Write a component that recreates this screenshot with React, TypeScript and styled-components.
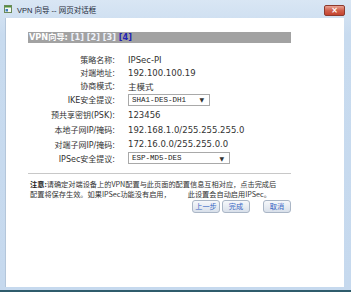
import React from 'react';
import styled, { createGlobalStyle } from 'styled-components';

const GlobalStyle = createGlobalStyle`
  html, body { margin: 0; padding: 0; background: #ffffff; }
  body { font-family: "DejaVu Sans", "Noto Sans CJK SC", sans-serif; }
`;

const Frame = styled.div`
  width: 351px;
  height: 292px;
  display: flex;
  flex-direction: column;
  box-sizing: border-box;
  background: linear-gradient(180deg, #d9e6f4 0%, #c8dbef 12%, #c6d9ee 100%);
  border-bottom: 2px solid #2f5c6c;
  overflow: hidden;
`;

const TitleBar = styled.div`
  height: 18px;
  flex: none;
  display: flex;
  align-items: center;
  padding: 0 6px 0 4px;
  gap: 5px;
`;

const TitleText = styled.span`
  font-family: "Liberation Sans", "Noto Sans CJK SC", sans-serif;
  font-size: 7.5px;
  color: #1e2a3a;
  flex: 1;
`;

const CloseButton = styled.div`
  width: 19px;
  height: 9px;
  border-radius: 2px;
  border: 1px solid #8c3a2e;
  background: linear-gradient(180deg, #e9a394 0%, #d0604c 50%, #c4432f 100%);
  color: #ffffff;
  font-family: "DejaVu Sans", sans-serif;
  font-size: 8px;
  font-weight: bold;
  line-height: 9px;
  text-align: center;
  margin-top: 2px;
`;

const Body = styled.div`
  flex: 1;
  margin: 0 7px 3px 5px;
  background: #ffffff;
  border-left: 1px solid #b4c6da;
  padding: 14px 0 0 22px;
  box-sizing: border-box;
`;

const Content = styled.div`
  width: 263px;
  display: flex;
  flex-direction: column;
`;

const StepBar = styled.div`
  height: 11px;
  background: #a2a2a2;
  color: #ffffff;
  font-size: 8.2px;
  font-weight: bold;
  line-height: 11px;
  padding-left: 1px;
  white-space: pre;
`;

const Step = styled.span<{ $active?: boolean }>`
  color: ${(p) => (p.$active ? '#2323b4' : '#eef2fb')};
`;

const Form = styled.div`
  display: grid;
  grid-template-columns: 87px 1fr;
  column-gap: 13px;
  margin-top: 10px;
`;

const Label = styled.div<{ $h: number }>`
  height: ${(p) => p.$h}px;
  display: flex;
  align-items: center;
  justify-content: flex-end;
  font-size: 8px;
  color: #333333;
  white-space: nowrap;
`;

const Value = styled.div<{ $h: number }>`
  height: ${(p) => p.$h}px;
  display: flex;
  align-items: center;
  font-size: 8.5px;
  color: #333333;
  white-space: nowrap;
`;

const Select = styled.div<{ $w: number }>`
  width: ${(p) => p.$w}px;
  height: 12px;
  box-sizing: border-box;
  border: 1px solid #a9a9a9;
  background: #ffffff;
  display: flex;
  align-items: center;
  justify-content: space-between;
  padding: 0 5px 0 3px;
  font-family: "Liberation Mono", "DejaVu Sans Mono", monospace;
  font-size: 7.5px;
  color: #222222;
`;

const Arrow = styled.span`
  font-family: "DejaVu Sans", sans-serif;
  font-size: 6px;
  color: #333333;
`;

const Divider = styled.div`
  height: 1px;
  background: #c8c8c8;
  margin-top: 8px;
`;

const Note = styled.div`
  margin-top: 5px;
  padding-left: 2px;
  font-family: "Noto Sans CJK SC", sans-serif;
  font-size: 7.2px;
  line-height: 10px;
  color: #333333;
  white-space: nowrap;
`;

const NoteTitle = styled.b`
  color: #222222;
`;

const NoteTail = styled.span`
  margin-left: 17px;
`;

const Buttons = styled.div`
  display: flex;
  justify-content: flex-end;
  margin-top: 1px;
`;

const Button = styled.div<{ $gap?: number }>`
  width: 28px;
  height: 13px;
  box-sizing: border-box;
  margin-left: ${(p) => p.$gap ?? 0}px;
  border: 1px solid #aab6c6;
  border-radius: 3px;
  background: linear-gradient(180deg, #f6f8fb 0%, #e6ebf2 55%, #d9e0ea 100%);
  color: #3a66c4;
  font-family: "Noto Sans CJK SC", sans-serif;
  font-size: 7.2px;
  line-height: 11px;
  text-align: center;
`;

const rows: { label: string; h: number; value?: string; select?: { text: string; w: number } }[] = [
  { label: '策略名称:', h: 13, value: 'IPSec-PI' },
  { label: '对端地址:', h: 13, value: '192.100.100.19' },
  { label: '协商模式:', h: 13, value: '主模式' },
  { label: 'IKE安全提议:', h: 15, select: { text: 'SHA1-DES-DH1', w: 82 } },
  { label: '预共享密钥(PSK):', h: 15, value: '123456' },
  { label: '本地子网IP/掩码:', h: 15, value: '192.168.1.0/255.255.255.0' },
  { label: '对端子网IP/掩码:', h: 14, value: '172.16.0.0/255.255.0.0' },
  { label: 'IPSec安全提议:', h: 14, select: { text: 'ESP-MD5-DES', w: 102 } },
];

function PageIcon() {
  return (
    <svg width='8' height='8' viewBox='0 0 8 8'>
      <rect x='0.5' y='0.5' width='7' height='7' fill='#f4f7f2' stroke='#6b8a5a' />
      <rect x='1' y='1' width='6' height='1.5' fill='#4f8f3a' />
      <rect x='1.5' y='4' width='2.5' height='2.5' fill='#3f7fc0' />
    </svg>
  );
}

export default function App() {
  return (
    <>
      <GlobalStyle />
      <Frame>
        <TitleBar>
          <PageIcon />
          <TitleText>VPN 向导 -- 网页对话框</TitleText>
          <CloseButton>×</CloseButton>
        </TitleBar>
        <Body>
          <Content>
            <StepBar>
              VPN向导: <Step>[1]</Step> <Step>[2]</Step> <Step>[3]</Step> <Step $active>[4]</Step>
            </StepBar>
            <Form>
              {rows.map((r) => (
                <React.Fragment key={r.label}>
                  <Label $h={r.h}>{r.label}</Label>
                  <Value $h={r.h}>
                    {r.select ? (
                      <Select $w={r.select.w}>
                        {r.select.text}
                        <Arrow>▼</Arrow>
                      </Select>
                    ) : (
                      r.value
                    )}
                  </Value>
                </React.Fragment>
              ))}
            </Form>
            <Divider />
            <Note>
              <div>
                <NoteTitle>注意:</NoteTitle>请确定对端设备上的VPN配置与此页面的配置信息互相对应，点击完成后
              </div>
              <div>
                配置将保存生效。如果IPSec功能没有启用，<NoteTail>此设置会自动启用IPSec。</NoteTail>
              </div>
            </Note>
            <Buttons>
              <Button>上一步</Button>
              <Button $gap={2}>完成</Button>
              <Button $gap={13}>取消</Button>
            </Buttons>
          </Content>
        </Body>
      </Frame>
    </>
  );
}
